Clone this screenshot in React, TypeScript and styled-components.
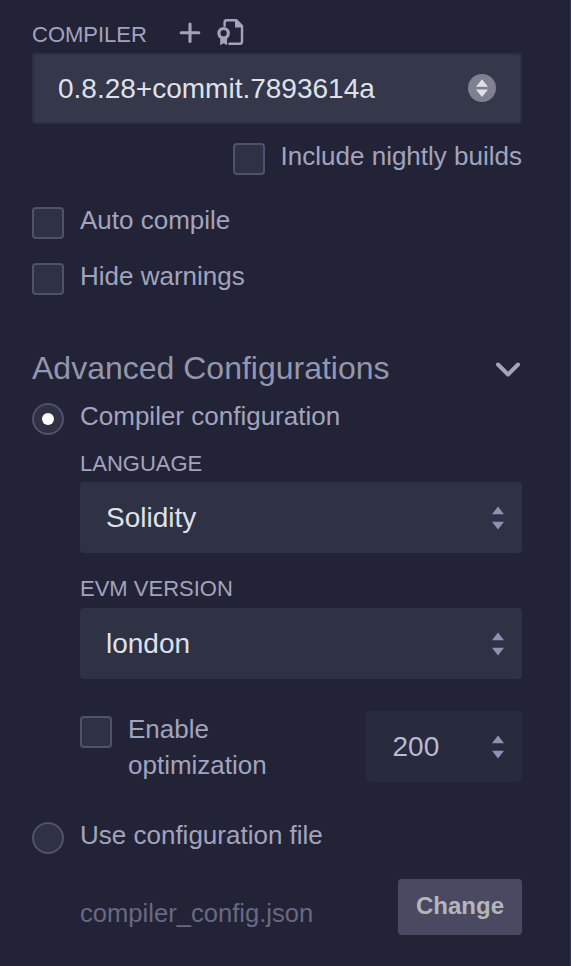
import React from "react";
import styled, { createGlobalStyle } from "styled-components";

const GlobalStyle = createGlobalStyle`
  * { box-sizing: border-box; }
  body {
    margin: 0;
    background: #222336;
    font-family: "Liberation Sans", Arial, sans-serif;
    color: #a2a3bd;
  }
`;

const Panel = styled.main`
  display: flex;
  flex-direction: column;
  width: 571px;
  height: 966px;
  padding: 16px 48px 0 32px;
  overflow: hidden;
  background: #222336;
  border-right: 1px solid #35384c;
`;

const Header = styled.header`
  display: flex;
  align-items: center;
  height: 37px;
`;

const Caption = styled.label<{ $top?: number }>`
  display: block;
  height: 26px;
  margin-top: ${(p) => p.$top ?? 0}px;
  font-size: 22px;
  line-height: 26px;
`;

const HeaderIcons = styled.div`
  display: flex;
  align-items: center;
  gap: 16px;
  height: 32px;
  margin-left: 32px;
  margin-bottom: 4px;
`;

const SelectBox = styled.div<{ $top?: number; $primary?: boolean }>`
  display: flex;
  flex-shrink: 0;
  align-items: center;
  justify-content: space-between;
  height: 71px;
  margin-top: ${(p) => p.$top ?? 0}px;
  padding: ${(p) => (p.$primary ? "0 24px" : "0 16px 0 26px")};
  border: ${(p) => (p.$primary ? "2px solid #2c3044" : "0")};
  border-radius: 4px;
  background: ${(p) => (p.$primary ? "#35374b" : "#2f3145")};
  color: #dfe1ea;
  font-size: 28px;
  line-height: 32px;
`;

const NumberBox = styled(SelectBox)`
  width: 156px;
  padding-left: 26.5px;
  background: #282a3d;
  color: #b9bbd1;
`;

const OptionRow = styled.label<{ $top: number; $alignEnd?: boolean }>`
  display: flex;
  align-items: flex-start;
  justify-content: ${(p) => (p.$alignEnd ? "flex-end" : "flex-start")};
  gap: 16px;
  margin-top: ${(p) => p.$top}px;
  font-size: 26px;
  line-height: 36px;
`;

const Toggle = styled.span<{ $round?: boolean }>`
  display: flex;
  flex-shrink: 0;
  align-items: center;
  justify-content: center;
  width: 32px;
  height: 32px;
  margin-top: 5px;
  border: 2px solid #50516a;
  border-radius: ${(p) => (p.$round ? "50%" : "4px")};
  background: #2f3145;
`;

const Dot = styled.span`
  width: 12px;
  height: 12px;
  border-radius: 50%;
  background: #fff;
`;

const SectionHeader = styled.div`
  display: flex;
  align-items: center;
  justify-content: space-between;
  height: 40px;
  margin-top: 53px;
  color: #9297ad;
  font-size: 32px;
  line-height: 40px;
`;

const Nested = styled.section`
  display: flex;
  flex-direction: column;
  margin-left: 48px;
`;

const OptimizeRow = styled.div`
  display: flex;
  align-items: flex-start;
  justify-content: space-between;
  margin-top: 32px;
`;

const OptimizeLabel = styled.span`
  width: 150px;
`;

const FileRow = styled.div`
  display: flex;
  justify-content: space-between;
  margin: 25px 0 0 48px;
`;

const FileName = styled.span`
  margin-top: 16px;
  color: #686982;
  font-size: 25.6px;
  line-height: 36px;
`;

const ChangeButton = styled.button`
  width: 124px;
  height: 56px;
  padding: 0 0 2px;
  border: 0;
  border-radius: 4px;
  background: #494a61;
  color: #b5b6bc;
  font: bold 24px/36px "Liberation Sans", Arial, sans-serif;
`;

const Icon = styled.svg`
  display: block;
  flex-shrink: 0;
`;

const PlusIcon = () => (
  <Icon width="22" height="26" viewBox="0 0 22 26">
    <path d="M11 4v17.4M2.2 12.7h17.6" stroke="#a2a3bd" strokeWidth="3.1" strokeLinecap="round" fill="none" />
  </Icon>
);

const CertificateIcon = () => (
  <Icon width="27" height="28" viewBox="0 0 27 28">
    <path
      d="M7.6 6.8V3.4Q7.6 1.3 9.7 1.3H19.3L25 7V22.5Q25 24.8 22.7 24.8H12.4"
      fill="none"
      stroke="#a2a3bd"
      strokeWidth="2.4"
      strokeLinecap="round"
    />
    <path d="M18 .8H19.8L26 7V8.6H18Z" fill="#a2a3bd" />
    <circle cx="6.6" cy="14.2" r="4.7" fill="none" stroke="#a2a3bd" strokeWidth="3.2" />
    <path d="M3.2 18.5H10.1V26.2L6.7 24.2L3.2 26.2Z" fill="#a2a3bd" />
  </Icon>
);

const SortArrows = () => (
  <Icon width="16" height="24" viewBox="0 0 16 24">
    <path d="M2 8.3L8 .6L14 8.3ZM2 15.7H14L8 23.4Z" fill="#8c93b2" />
  </Icon>
);

const RoundSortIcon = () => (
  <Icon width="28" height="30" viewBox="0 0 28 30">
    <circle cx="14" cy="14" r="14" fill="#7f8090" />
    <path d="M8 12.7L14 5.2L20 12.7ZM8 15.6H20L14 23Z" fill="#dfe1ea" />
  </Icon>
);

const ChevronIcon = () => (
  <Icon width="28" height="20" viewBox="0 0 28 20">
    <path d="M4 6.5L14 16.5L24 6.5" fill="none" stroke="#a2a3bd" strokeWidth="4" strokeLinecap="round" strokeLinejoin="round" />
  </Icon>
);

export default function App() {
  return (
    <>
      <GlobalStyle />
      <Panel>
        <Header>
          <Caption>COMPILER</Caption>
          <HeaderIcons>
            <PlusIcon />
            <CertificateIcon />
          </HeaderIcons>
        </Header>
        <SelectBox $primary>
          <span>0.8.28+commit.7893614a</span>
          <RoundSortIcon />
        </SelectBox>
        <OptionRow $top={14} $alignEnd>
          <Toggle />
          <span>Include nightly builds</span>
        </OptionRow>
        <OptionRow $top={27}>
          <Toggle />
          <span>Auto compile</span>
        </OptionRow>
        <OptionRow $top={19}>
          <Toggle />
          <span>Hide warnings</span>
        </OptionRow>
        <SectionHeader>
          <span>Advanced Configurations</span>
          <ChevronIcon />
        </SectionHeader>
        <OptionRow $top={10}>
          <Toggle $round>
            <Dot />
          </Toggle>
          <span>Compiler configuration</span>
        </OptionRow>
        <Nested>
          <Caption $top={16}>LANGUAGE</Caption>
          <SelectBox $top={5}>
            <span>Solidity</span>
            <SortArrows />
          </SelectBox>
          <Caption $top={23}>EVM VERSION</Caption>
          <SelectBox $top={6}>
            <span>london</span>
            <SortArrows />
          </SelectBox>
          <OptimizeRow>
            <OptionRow $top={0}>
              <Toggle />
              <OptimizeLabel>Enable optimization</OptimizeLabel>
            </OptionRow>
            <NumberBox>
              <span>200</span>
              <SortArrows />
            </NumberBox>
          </OptimizeRow>
        </Nested>
        <OptionRow $top={34}>
          <Toggle $round />
          <span>Use configuration file</span>
        </OptionRow>
        <FileRow>
          <FileName>compiler_config.json</FileName>
          <ChangeButton>Change</ChangeButton>
        </FileRow>
      </Panel>
    </>
  );
}
